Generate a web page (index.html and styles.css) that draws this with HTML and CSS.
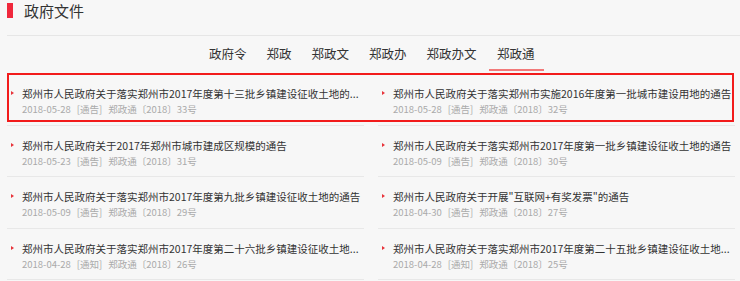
FILE: index.html
```html
<!DOCTYPE html>
<html lang="zh-CN">
<head>
<meta charset="utf-8">
<title>政府文件</title>
<link rel="stylesheet" href="styles.css">
</head>
<body>
<div class="panel">
  <div class="head"><span class="bar"></span><h2 class="head-title">政府文件</h2></div>
  <nav class="tabs">
    <a class="tab">政府令</a>
    <a class="tab">郑政</a>
    <a class="tab">郑政文</a>
    <a class="tab">郑政办</a>
    <a class="tab">郑政办文</a>
    <a class="tab active">郑政通</a>
  </nav>
  <div class="list">
    <div class="mark"></div>
    <div class="item">
      <div class="title"><span class="arrow"></span>郑州市人民政府关于落实郑州市2017年度第十三批乡镇建设征收土地的...</div>
      <div class="meta"><span>2018-05-28</span><span>[通告]</span><span>郑政通〔2018〕33号</span></div>
    </div>
    <div class="item">
      <div class="title"><span class="arrow"></span>郑州市人民政府关于落实郑州市实施2016年度第一批城市建设用地的通告</div>
      <div class="meta"><span>2018-05-28</span><span>[通告]</span><span>郑政通〔2018〕32号</span></div>
    </div>
    <div class="item">
      <div class="title"><span class="arrow"></span>郑州市人民政府关于2017年郑州市城市建成区规模的通告</div>
      <div class="meta"><span>2018-05-23</span><span>[通告]</span><span>郑政通〔2018〕31号</span></div>
    </div>
    <div class="item">
      <div class="title"><span class="arrow"></span>郑州市人民政府关于落实郑州市2017年度第一批乡镇建设征收土地的通告</div>
      <div class="meta"><span>2018-05-09</span><span>[通告]</span><span>郑政通〔2018〕30号</span></div>
    </div>
    <div class="item">
      <div class="title"><span class="arrow"></span>郑州市人民政府关于落实郑州市2017年度第九批乡镇建设征收土地的通告</div>
      <div class="meta"><span>2018-05-09</span><span>[通告]</span><span>郑政通〔2018〕29号</span></div>
    </div>
    <div class="item">
      <div class="title"><span class="arrow"></span>郑州市人民政府关于开展"互联网+有奖发票"的通告</div>
      <div class="meta"><span>2018-04-30</span><span>[通告]</span><span>郑政通〔2018〕27号</span></div>
    </div>
    <div class="item">
      <div class="title"><span class="arrow"></span>郑州市人民政府关于落实郑州市2017年度第二十六批乡镇建设征收土地...</div>
      <div class="meta"><span>2018-04-28</span><span>[通知]</span><span>郑政通〔2018〕26号</span></div>
    </div>
    <div class="item">
      <div class="title"><span class="arrow"></span>郑州市人民政府关于落实郑州市2017年度第二十五批乡镇建设征收土地...</div>
      <div class="meta"><span>2018-04-28</span><span>[通知]</span><span>郑政通〔2018〕25号</span></div>
    </div>
  </div>
</div>
</body>
</html>
```

FILE: styles.css
```css
html, body {
  margin: 0;
  padding: 0;
  background: #f7f7f7;
  font-family: "Noto Sans CJK SC", "Noto Sans", sans-serif;
  color: #333;
}

.panel {
  margin-left: 7px;
  width: 733px;
}

.head {
  display: flex;
  align-items: flex-start;
  height: 35px;
  border-bottom: 1px solid #e6e6e6;
}

.bar {
  width: 6px;
  height: 15px;
  margin-top: 3px;
  background: #f0283c;
}

.head-title {
  margin: 0 0 0 11px;
  font-size: 15px;
  font-weight: normal;
  line-height: 22px;
  color: #333;
}

.tabs {
  display: flex;
  justify-content: center;
  gap: 5px;
  margin-top: 8px;
  padding-right: 2px;
}

.tab {
  padding: 0 7.5px 5px;
  font-size: 12.5px;
  line-height: 20px;
  color: #333;
  border-bottom: 2px solid transparent;
}

.tab.active {
  padding: 0 9px 5px 8px;
  border-bottom-color: #f27a7a;
}

.list {
  position: relative;
  display: grid;
  grid-template-columns: 357px 357px;
  column-gap: 14px;
  margin-top: 3px;
  width: 728px;
}

.mark {
  position: absolute;
  top: -1.5px;
  left: 0;
  width: 723px;
  height: 45.5px;
  border: 2px solid #f21b1b;
}

.item {
  padding: 11px 0 7.5px;
  border-bottom: 1px solid #e8e8e8;
}

.title {
  position: relative;
  padding-left: 15px;
  font-size: 10.5px;
  line-height: 17px;
  color: #333;
  white-space: nowrap;
  overflow: hidden;
}

.arrow {
  position: absolute;
  left: 4px;
  top: 6px;
  width: 0;
  height: 0;
  border-left: 3px solid #e8333a;
  border-top: 2.5px solid transparent;
  border-bottom: 2.5px solid transparent;
}

.meta {
  display: flex;
  gap: 6px;
  padding-left: 15px;
  font-size: 9.5px;
  line-height: 15px;
  color: #aaa;
}
```
